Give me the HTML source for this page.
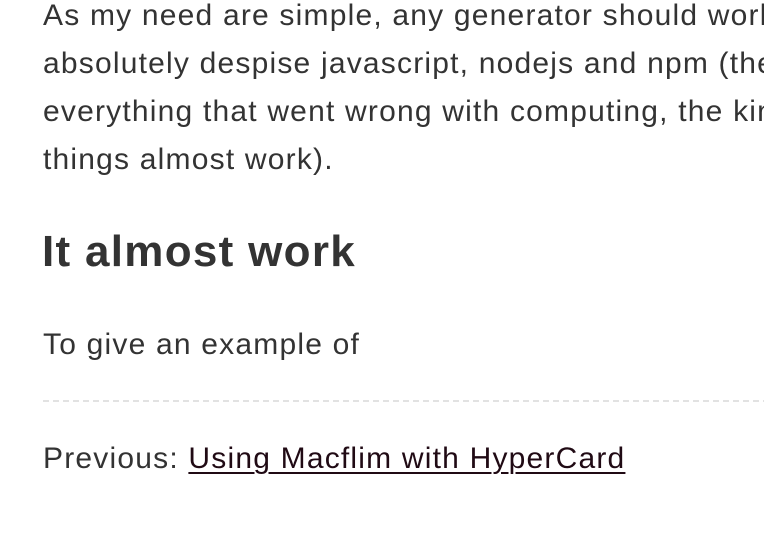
<!DOCTYPE html>
<html><head><meta charset="utf-8"><style>
html,body{margin:0;padding:0;background:#fff;width:764px;height:540px;overflow:hidden}
body{font-family:"Liberation Sans",sans-serif;color:#333;position:relative}
.t{position:absolute;left:43px;right:0;overflow:hidden;white-space:nowrap;font-size:30px;line-height:48px;letter-spacing:1.2px}
h2{position:absolute;left:42px;top:223px;margin:0;font-size:44px;line-height:58px;font-weight:bold;white-space:nowrap;letter-spacing:1.3px}
.hr{position:absolute;left:43px;right:0;top:400px;height:2px;background:repeating-linear-gradient(90deg,#e2e2e2 0 6px,transparent 6px 10px)}
a{color:#200a14;text-decoration:underline;text-decoration-thickness:1.5px;text-underline-offset:4px}
</style></head><body>
<div class="t" style="top:-8px">As my need are simple, any generator should work. I</div>
<div class="t" style="top:40px">absolutely despise javascript, nodejs and npm (the</div>
<div class="t" style="top:88px">everything that went wrong with computing, the kind</div>
<div class="t" style="top:136px">things almost work).</div>
<h2>It almost work</h2>
<div class="t" style="top:321px">To give an example of</div>
<div class="hr"></div>
<div class="t" style="top:435px">Previous: <a>Using Macflim with HyperCard</a></div>
</body></html>
